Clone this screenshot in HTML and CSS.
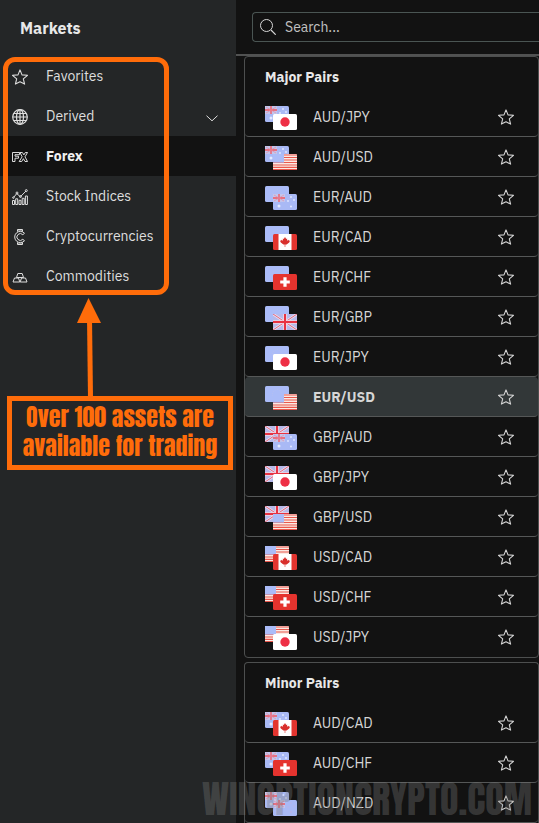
FILE: index.html
```html
<!DOCTYPE html>
<html lang="en">
<head>
<meta charset="utf-8">
<meta name="viewport" content="width=device-width, initial-scale=1">
<title>Markets</title>
<link rel="stylesheet" href="styles.css">
</head>
<body>
<svg class="sprite" aria-hidden="true">
  <symbol id="star" viewBox="0 0 16 16"><path d="M8 .9l2 5 5.500.4-4.200 3.500 1.300 5.300L8 12.700l-4.600 2.400 1.300-5.300L.5 6.300 6 5.900z" fill="none" stroke="currentColor" stroke-width="1.100" stroke-linejoin="round"/></symbol>
  <symbol id="au-canton" viewBox="0 0 12 8"><path d="M0 0h12v8H0z" fill="#c3c5ec"/><path d="M0 4h12M6 0v8" stroke="#f3555f" stroke-width="1.3"/><path d="M1 1l10 6M11 1L1 7" stroke="#e58da5" stroke-width=".7"/></symbol>
  <symbol id="flag-au" viewBox="0 0 24 16"><rect width="24" height="16" rx="1.5" fill="#a9b9f5"/><use href="#au-canton" width="12" height="8"/><g fill="#e4eaff"><circle cx="6" cy="12" r="1.5"/><circle cx="18" cy="3" r=".9"/><circle cx="15" cy="7" r=".9"/><circle cx="21" cy="6" r=".9"/><circle cx="18" cy="12.500" r="1"/></g></symbol>
  <symbol id="flag-nz" viewBox="0 0 24 16"><rect width="24" height="16" rx="1.5" fill="#a9b9f5"/><use href="#au-canton" width="12" height="8"/><g fill="#b9b3e6"><circle cx="18" cy="3" r=".8"/><circle cx="15" cy="7" r=".8"/><circle cx="21" cy="6" r=".8"/><circle cx="18" cy="12" r=".9"/></g></symbol>
  <symbol id="flag-eu" viewBox="0 0 24 16"><rect width="24" height="16" rx="1.5" fill="#abbcf8"/><circle cx="12" cy="8" r="4.500" fill="none" stroke="#bcc3e8" stroke-width=".8" stroke-dasharray=".8 1.500"/></symbol>
  <symbol id="flag-jp" viewBox="0 0 24 16"><rect width="24" height="16" rx="1.5" fill="#fff"/><circle cx="12" cy="8" r="4.700" fill="#ee2f45"/></symbol>
  <symbol id="flag-us" viewBox="0 0 24 16"><rect width="24" height="16" rx="1" fill="#fbe9e4"/><path d="M0 1h24M0 3.500h24M0 6h24M0 8.500h24M0 11h24M0 13.400h24M0 15.500h24" stroke="#e9584d" stroke-width="1.200"/><path d="M0 0h11v8.600H0z" fill="#abbcf8"/></symbol>
  <symbol id="flag-ca" viewBox="0 0 24 16"><rect width="24" height="16" rx="1.5" fill="#e3342f"/><path d="M5.500 0h13v16h-13z" fill="#fff"/><path d="M12 3l1.200 2 1-.5-.2 2.300 1.500-1 .3.800 1.200.2-.8 1.700-2.600 2H12.300V13h-.6v-2.500h-1.300l-2.600-2L7 6.800l1.200-.2.300-.8 1.500 1-.2-2.300 1 .5z" fill="#d92f2c"/></symbol>
  <symbol id="flag-ch" viewBox="0 0 24 16"><rect width="24" height="16" rx="1.5" fill="#e5332e"/><path d="M10.400 3.200h3.200v3.200h3.200v3.200h-3.200v3.200h-3.200V9.600H7.200V6.400h3.200z" fill="#fff"/></symbol>
  <symbol id="flag-gb" viewBox="0 0 24 16"><rect width="24" height="16" rx="1" fill="#b6b9ea"/><path d="M0 0l24 16M24 0L0 16" stroke="#ecdff0" stroke-width="2.400"/><path d="M0 0l24 16M24 0L0 16" stroke="#e0667d" stroke-width="1"/><path d="M0 8h24M12 0v16" stroke="#f0d6e2" stroke-width="3.600"/><path d="M0 8h24M12 0v16" stroke="#e83342" stroke-width="2"/></symbol>
</svg>

<div class="app">
  <aside class="sidebar">
    <h1 class="title">Markets</h1>
    <nav class="nav">
      <a class="item" href="#"><svg class="icon"><use href="#star"/></svg>Favorites</a>
      <a class="item" href="#"><svg class="icon" viewBox="0 0 16 16"><g fill="none" stroke="currentColor" stroke-width="1.200"><circle cx="8" cy="8" r="7.300"/><ellipse cx="8" cy="8" rx="3.500" ry="7.300"/><path d="M8 .7v14.600M.7 8h14.600M1.700 4.500h12.600M1.700 11.500h12.600"/></g></svg>Derived<svg class="chevron" viewBox="0 0 12 7"><path d="M.5.7L6 5.800 11.500.7" fill="none" stroke="currentColor"/></svg></a>
      <a class="item active" href="#"><svg class="icon" viewBox="0 0 16 16"><path d="M.5 3.500h7v2.200H3v1.500h3.500v2H3v3.300H.5zM8 3.500h2.400l1.500 2.400 1.400-2.400h2.200l-2.500 4.300 2.500 4.700H13l-1.600-2.800-1.700 2.800H7.200l2.900-4.700z" fill="none" stroke="currentColor" stroke-width=".9"/></svg>Forex</a>
      <a class="item" href="#"><svg class="icon" viewBox="0 0 16 16"><g fill="none" stroke="currentColor"><path d="M.5 15.500v-4h2v4zM3.700 15.500V9.800h2v5.700zM7 15.500v-4.200h2v4.200zM10.200 15.500V9.300h2v6.200zM13.400 15.500V7h2v8.500z"/><path d="M1.800 8.200l3-3.700 3.500 3.300L14 2"/><circle cx="1.400" cy="8.600" r=".8"/><circle cx="5" cy="4" r="1"/><circle cx="8.500" cy="7.500" r="1"/><circle cx="14.300" cy="1.600" r="1"/></g></svg>Stock Indices</a>
      <a class="item" href="#"><svg class="icon" viewBox="0 0 16 16"><g fill="none" stroke="currentColor"><path d="M12.500 4.300A5.600 5.600 0 1 0 12.500 11.700L10.800 10.300A3.400 3.400 0 1 1 10.800 5.700z"/><path d="M5.500 2.700V.5h5v2.200M5.500 13.300v2.200h5v-2.200M7 .8v1.500M9 .8v1.500M7 13.700v1.500M9 13.700v1.500"/></g></svg>Cryptocurrencies</a>
      <a class="item" href="#"><svg class="icon" viewBox="0 0 16 16"><path d="M5.800 4.500h4.400l1.300 4h-7zM2.500 9h4l1.300 4H1zM9.500 9h4l1.500 4H8.200z" fill="none" stroke="currentColor" stroke-linejoin="round"/></svg>Commodities</a>
    </nav>
    <div class="highlight"></div>
    <svg class="arrow" viewBox="0 0 26 100"><path d="M11.500 0L24 25H0z" fill="#ff6c0a"/><path d="M12.500 20L13.500 100" stroke="#ff6c0a" stroke-width="5"/></svg>
    <p class="callout">Over 100 assets are<br>available for trading</p>
  </aside>

  <main class="panel">
    <div class="search-bar">
      <label class="search"><svg class="search-icon" viewBox="0 0 16 16"><g fill="none" stroke="currentColor"><circle cx="6.500" cy="6.500" r="6"/><path d="M11 11l4.700 4.700" stroke-width="1.200"/></g></svg><input type="search" placeholder="Search..." aria-label="Search"></label>
    </div>

    <section class="group">
      <h2>Major Pairs</h2>
      <ul>
        <li><span class="flags"><svg><use href="#flag-au"/></svg><svg><use href="#flag-jp"/></svg></span><span class="pair">AUD/JPY</span><button aria-label="Favorite AUD/JPY"><svg><use href="#star"/></svg></button></li>
        <li><span class="flags"><svg><use href="#flag-au"/></svg><svg><use href="#flag-us"/></svg></span><span class="pair">AUD/USD</span><button aria-label="Favorite AUD/USD"><svg><use href="#star"/></svg></button></li>
        <li><span class="flags"><svg><use href="#flag-eu"/></svg><svg><use href="#flag-au"/></svg></span><span class="pair">EUR/AUD</span><button aria-label="Favorite EUR/AUD"><svg><use href="#star"/></svg></button></li>
        <li><span class="flags"><svg><use href="#flag-eu"/></svg><svg><use href="#flag-ca"/></svg></span><span class="pair">EUR/CAD</span><button aria-label="Favorite EUR/CAD"><svg><use href="#star"/></svg></button></li>
        <li><span class="flags"><svg><use href="#flag-eu"/></svg><svg><use href="#flag-ch"/></svg></span><span class="pair">EUR/CHF</span><button aria-label="Favorite EUR/CHF"><svg><use href="#star"/></svg></button></li>
        <li><span class="flags"><svg><use href="#flag-eu"/></svg><svg><use href="#flag-gb"/></svg></span><span class="pair">EUR/GBP</span><button aria-label="Favorite EUR/GBP"><svg><use href="#star"/></svg></button></li>
        <li><span class="flags"><svg><use href="#flag-eu"/></svg><svg><use href="#flag-jp"/></svg></span><span class="pair">EUR/JPY</span><button aria-label="Favorite EUR/JPY"><svg><use href="#star"/></svg></button></li>
        <li class="selected"><span class="flags"><svg><use href="#flag-eu"/></svg><svg><use href="#flag-us"/></svg></span><span class="pair">EUR/USD</span><button aria-label="Favorite EUR/USD"><svg><use href="#star"/></svg></button></li>
        <li><span class="flags"><svg><use href="#flag-gb"/></svg><svg><use href="#flag-au"/></svg></span><span class="pair">GBP/AUD</span><button aria-label="Favorite GBP/AUD"><svg><use href="#star"/></svg></button></li>
        <li><span class="flags"><svg><use href="#flag-gb"/></svg><svg><use href="#flag-jp"/></svg></span><span class="pair">GBP/JPY</span><button aria-label="Favorite GBP/JPY"><svg><use href="#star"/></svg></button></li>
        <li><span class="flags"><svg><use href="#flag-gb"/></svg><svg><use href="#flag-us"/></svg></span><span class="pair">GBP/USD</span><button aria-label="Favorite GBP/USD"><svg><use href="#star"/></svg></button></li>
        <li><span class="flags"><svg><use href="#flag-us"/></svg><svg><use href="#flag-ca"/></svg></span><span class="pair">USD/CAD</span><button aria-label="Favorite USD/CAD"><svg><use href="#star"/></svg></button></li>
        <li><span class="flags"><svg><use href="#flag-us"/></svg><svg><use href="#flag-ch"/></svg></span><span class="pair">USD/CHF</span><button aria-label="Favorite USD/CHF"><svg><use href="#star"/></svg></button></li>
        <li><span class="flags"><svg><use href="#flag-us"/></svg><svg><use href="#flag-jp"/></svg></span><span class="pair">USD/JPY</span><button aria-label="Favorite USD/JPY"><svg><use href="#star"/></svg></button></li>
      </ul>
    </section>

    <section class="group continued">
      <h2>Minor Pairs</h2>
      <ul>
        <li><span class="flags"><svg><use href="#flag-au"/></svg><svg><use href="#flag-ca"/></svg></span><span class="pair">AUD/CAD</span><button aria-label="Favorite AUD/CAD"><svg><use href="#star"/></svg></button></li>
        <li><span class="flags"><svg><use href="#flag-au"/></svg><svg><use href="#flag-ch"/></svg></span><span class="pair">AUD/CHF</span><button aria-label="Favorite AUD/CHF"><svg><use href="#star"/></svg></button></li>
        <li><span class="flags"><svg><use href="#flag-au"/></svg><svg><use href="#flag-nz"/></svg></span><span class="pair">AUD/NZD</span><button aria-label="Favorite AUD/NZD"><svg><use href="#star"/></svg></button></li>
      </ul>
    </section>
  </main>
  <div class="watermark">WINOPTIONCRYPTO.COM</div>
</div>
</body>
</html>
```
FILE: styles.css
```css
* { box-sizing: border-box; }

body {
  margin: 0;
  background: #121212;
  color: #d6d6d6;
  font: 14px/20px "IBM Plex Sans", Roboto, "Liberation Sans", sans-serif;
}

h1, h2, p, ul { margin: 0; padding: 0; }
ul { list-style: none; }
svg { display: block; flex: none; }
.sprite { position: absolute; width: 0; height: 0; }

.app {
  position: relative;
  display: flex;
  min-height: 100vh;
  overflow: hidden;
}

/* Sidebar */
.sidebar {
  position: relative;
  flex: 0 0 236px;
  background: #242627;
}

.title {
  padding: 18px 20px;
  font-size: 16px;
  line-height: 20px;
  color: #e8e8e8;
}

.item {
  display: flex;
  align-items: center;
  gap: 18px;
  height: 40px;
  padding: 0 18px 0 12px;
  color: #dedede;
  text-decoration: none;
}

.item.active {
  background: #121212;
  color: #f0f0f0;
  font-weight: 700;
}

.icon { width: 16px; height: 16px; margin-top: 2px; }
.chevron { width: 12px; height: 7px; margin: 4px 0 0 auto; }

/* Annotations */
.highlight {
  position: absolute;
  top: 57px;
  left: 3px;
  width: 166px;
  height: 238px;
  border: 5px solid #ff6c0a;
  border-radius: 12px;
  pointer-events: none;
}

.arrow {
  position: absolute;
  top: 298px;
  left: 77px;
  width: 26px;
  height: 100px;
}

.callout {
  position: absolute;
  top: 396px;
  left: 7px;
  width: 226px;
  padding: 2px 0 4px;
  border: 5px solid #ff6c0a;
  color: #ff6c0a;
  font: 400 24px/29px Impact, Anton, "Roboto Condensed", "Liberation Sans Narrow", sans-serif;
  text-align: center;
  white-space: nowrap;
}

.watermark {
  position: absolute;
  right: 7px;
  bottom: 4px;
  color: rgba(120, 120, 120, .36);
  font: 400 38px/40px Impact, Anton, "Roboto Condensed", "Liberation Sans Narrow", sans-serif;
  pointer-events: none;
}

/* Instrument list */
.panel { flex: 1; min-width: 0; }

.search-bar {
  padding: 12px 0 12px 16px;
  border-bottom: 2px solid #515252;
}

.search {
  display: flex;
  align-items: center;
  gap: 9px;
  height: 30px;
  padding-left: 7px;
  border: 1px solid #4a5553;
  border-right: 0;
  border-radius: 4px 0 0 4px;
}

.search-icon { width: 16px; height: 16px; }

.search input {
  flex: 1;
  min-width: 0;
  padding: 0;
  border: 0;
  outline: 0;
  background: none;
  color: #d6d6d6;
  font: inherit;
}

.search input::placeholder { color: #c2c2c2; opacity: 1; }

.group {
  margin: 0 0 4px 8px;
  border: 1px solid #4d4f4f;
  border-radius: 4px;
}

.group.continued {
  margin-bottom: 0;
  border-bottom: 0;
  border-radius: 4px 4px 0 0;
}

.group h2 {
  padding: 10px 20px;
  color: #e8e8e8;
  font-size: 14px;
  line-height: 20px;
}

.group li {
  display: flex;
  align-items: center;
  gap: 16px;
  height: 40px;
  padding: 0 24px 0 20px;
  border-bottom: 1px solid #555757;
  border-radius: 4px;
}

.group li:last-child { border-bottom-color: transparent; }
.group.continued li:last-child { border-bottom-color: #555757; }

.group li.selected {
  background: #323738;
  font-weight: 700;
}

.flags {
  display: grid;
  grid-template: 8px 8px 8px / 8px 16px 8px;
  margin-top: 3px;
}

.flags svg { width: 24px; height: 16px; grid-area: 1 / 1 / 3 / 3; }
.flags svg + svg { grid-area: 2 / 2 / 4 / 4; }

.pair { flex: 1; }

.group button {
  padding: 1px 0 0;
  border: 0;
  background: none;
  color: #d6d6d6;
  cursor: pointer;
}

.group button svg { width: 16px; height: 16px; }
```
